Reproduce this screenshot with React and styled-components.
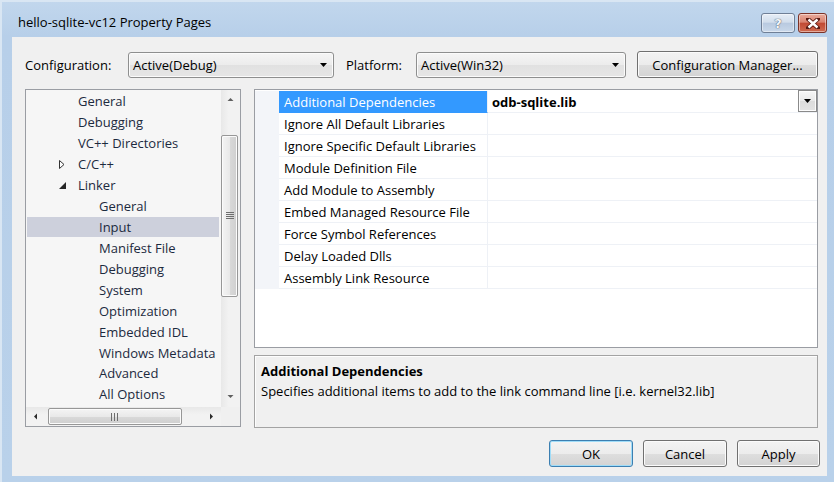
import React from 'react';
import styled, { createGlobalStyle } from 'styled-components';

const GlobalStyle = createGlobalStyle`
  html, body { margin: 0; padding: 0; background: #b9d1ea; }
  body { font-family: 'Open Sans', 'Noto Sans', sans-serif; font-size: 13px; color: #000; }
  * { box-sizing: border-box; }
`;

/* ---------- window frame ---------- */

const Window = styled.div`
  width: 834px;
  height: 482px;
  display: flex;
  flex-direction: column;
  padding: 0 7px 6px 12px;
  overflow: hidden;
  background: linear-gradient(180deg, #c2d7ed 0px, #b7cfe9 36px, #b9d1ea 100%);
  box-shadow: inset 2px 2px 0 #d9e6f3;
`;

const TitleBar = styled.div`
  height: 37px;
  display: flex;
  align-items: flex-start;
  padding-left: 6px;
`;

const Title = styled.div`
  font-size: 13px;
  line-height: 18px;
  margin-top: 13px;
  color: #000;
  white-space: nowrap;
`;

const CaptionButtons = styled.div`
  margin-left: auto;
  margin-top: 13px;
  display: flex;
  gap: 3px;
`;

const CaptionButton = styled.div`
  width: ${(p) => p.$w}px;
  height: 20px;
  border-radius: 3px;
  border: 1px solid ${(p) => (p.$close ? '#7b3328' : '#6f7f96')};
  background: ${(p) =>
    p.$close
      ? 'linear-gradient(180deg, #e9ab9c 0%, #d98370 45%, #c24a34 52%, #cf6a50 100%)'
      : 'linear-gradient(180deg, #e6edf6 0%, #d2deec 45%, #b9cae0 52%, #c9d8ea 100%)'};
  box-shadow: inset 0 0 0 1px rgba(255, 255, 255, 0.45);
  display: flex;
  align-items: center;
  justify-content: center;
`;

const HelpGlyph = styled.span`
  font-family: 'DejaVu Sans', sans-serif;
  font-weight: bold;
  font-size: 13px;
  line-height: 1;
  color: #f4f6fa;
  text-shadow: 0 0 1px #4a5668, 0 0 1px #4a5668;
`;

/* ---------- client area ---------- */

const Client = styled.div`
  flex: 1;
  background: #f0f0f0;
  display: flex;
  flex-direction: column;
  padding: 14px 9px 9px 13px;
`;

const Toolbar = styled.div`
  display: grid;
  grid-template-columns: 103px 206px 82px 210px 1fr;
  align-items: center;
  height: 27px;
`;

const FieldLabel = styled.span`
  padding-left: ${(p) => p.$indent || 0}px;
  white-space: nowrap;
`;

const Select = styled.div`
  height: 26px;
  border: 1px solid #8e8f8f;
  border-radius: 3px;
  background: linear-gradient(180deg, #f5f5f5 0%, #ececec 50%, #e1e1e1 51%, #e6e6e6 100%);
  box-shadow: inset 0 0 0 1px #fbfbfb;
  display: flex;
  align-items: center;
  padding: 0 6px 0 4px;
  justify-content: space-between;
`;

const PushButton = styled.button`
  font: inherit;
  color: #000;
  width: ${(p) => p.$w || 84}px;
  height: ${(p) => p.$h || 27}px;
  justify-self: end;
  padding: 0;
  border: 1px solid ${(p) => (p.$default ? '#3c7fb1' : '#707070')};
  border-radius: 3px;
  background: linear-gradient(180deg, #f3f3f3 0%, #ececec 50%, #dedede 51%, #d3d3d3 100%);
  box-shadow: inset 0 0 0 1px ${(p) => (p.$default ? '#9fdcf8' : '#fbfbfb')};
`;

const Main = styled.div`
  margin-top: 11px;
  height: 339px;
  display: grid;
  grid-template-columns: 216px 1fr;
  column-gap: 13px;
`;

/* ---------- category tree ---------- */

const TreePanel = styled.div`
  border: 1px solid #9a9da3;
  background: #f6f6f6;
  display: grid;
  grid-template-columns: 1fr 19px;
  grid-template-rows: 1fr 19px;
  height: 338px;
`;

const TreeList = styled.div`
  padding-top: 1px;
  overflow: hidden;
`;

const TreeRow = styled.div`
  height: 20.93px;
  margin: 0 2px 0 1px;
  display: flex;
  align-items: center;
  padding-left: ${(p) => p.$level * 21 + 30}px;
  background: ${(p) => (p.$selected ? '#cdd0dc' : 'transparent')};
  color: #1c2a3e;
  white-space: nowrap;
`;

const Expander = styled.span`
  width: 21px;
  height: 21px;
  flex: none;
  display: flex;
  align-items: center;
  padding-left: 2px;
`;

const VScroll = styled.div`
  background: linear-gradient(90deg, #e8e8e8 0%, #f2f2f2 40%, #f2f2f2 100%);
  display: flex;
  flex-direction: column;
`;

const HScroll = styled.div`
  background: linear-gradient(180deg, #e8e8e8 0%, #f2f2f2 40%, #f2f2f2 100%);
  display: flex;
  align-items: center;
`;

const ScrollArrow = styled.div`
  flex: none;
  width: ${(p) => (p.$vertical ? '19px' : '20px')};
  height: ${(p) => (p.$vertical ? '20px' : '19px')};
  display: flex;
  align-items: center;
  justify-content: center;
`;

const ScrollRest = styled.div`
  flex: 1;
`;

const VThumb = styled.div`
  flex: none;
  margin: ${(p) => p.$offset}px 2px 0 0;
  height: ${(p) => p.$size}px;
  border: 1px solid #979797;
  border-radius: 2px;
  background: linear-gradient(90deg, #f4f4f4 0%, #e9e9e9 50%, #d9d9d9 51%, #cfcfcf 100%);
  box-shadow: inset 0 0 0 1px #fbfbfb;
  display: flex;
  align-items: center;
  justify-content: center;
`;

const HThumb = styled.div`
  flex: none;
  margin-left: ${(p) => p.$offset}px;
  width: ${(p) => p.$size}px;
  height: 17px;
  border: 1px solid #979797;
  border-radius: 2px;
  background: linear-gradient(180deg, #f4f4f4 0%, #e9e9e9 50%, #d9d9d9 51%, #cfcfcf 100%);
  box-shadow: inset 0 0 0 1px #fbfbfb;
  display: flex;
  align-items: center;
  justify-content: center;
`;

const ScrollCorner = styled.div`
  background: #f0f0f0;
`;

/* ---------- property grid ---------- */

const RightColumn = styled.div`
  display: flex;
  flex-direction: column;
  gap: 7px;
`;

const GridPanel = styled.div`
  flex: 1;
  border: 1px solid #9a9da3;
  background: #fff;
  padding-top: 1px;
`;

const GridRow = styled.div`
  display: grid;
  grid-template-columns: 24px 209px 1fr;
  height: 22px;
`;

const Gutter = styled.div`
  background: #f3f5f9;
`;

const NameCell = styled.div`
  display: flex;
  align-items: center;
  padding-left: 5px;
  height: 22px;
  border-bottom: 1px solid ${(p) => (p.$selected ? '#3399ff' : '#eef1f6')};
  border-right: 1px solid #eef1f6;
  background: ${(p) => (p.$selected ? '#3399ff' : '#fff')};
  color: ${(p) => (p.$selected ? '#fff' : '#000')};
  white-space: nowrap;
`;

const ValueCell = styled.div`
  display: flex;
  align-items: center;
  justify-content: space-between;
  padding-left: 4px;
  height: 22px;
  border-bottom: 1px solid #eef1f6;
  font-weight: ${(p) => (p.$bold ? 700 : 400)};
  white-space: nowrap;
`;

const DropButton = styled.div`
  width: 19px;
  height: 22px;
  margin-top: -1px;
  border: 1px solid #8a8a8a;
  background: linear-gradient(180deg, #f6f6f6 0%, #e9e9e9 50%, #dcdcdc 51%, #e3e3e3 100%);
  box-shadow: inset 0 0 0 1px #fcfcfc;
  display: flex;
  align-items: center;
  justify-content: center;
`;

const Description = styled.div`
  height: 73px;
  border: 1px solid #a3a3a3;
  box-shadow: inset 1px 1px 0 #fdfdfd;
  background: #f0f0f0;
  padding: 5px 6px;
  line-height: 20px;
`;

const DescTitle = styled.div`
  font-weight: 700;
`;

const ButtonRow = styled.div`
  margin-top: 12px;
  margin-right: -2px;
  display: flex;
  justify-content: flex-end;
  gap: 10px;
`;

/* ---------- small glyphs ---------- */

const DownTriangle = ({ w = 7, h = 4 }) => (
  <svg width={w} height={h} viewBox="0 0 7 4">
    <path d="M0 0 H7 L3.5 4 Z" fill="#000" />
  </svg>
);

const Arrow = ({ dir }) => {
  const paths = {
    up: 'M0.5 4 L3.5 1 L6.5 4 Z',
    down: 'M0.5 1 L3.5 4 L6.5 1 Z',
    left: 'M4 0.5 L1 3.5 L4 6.5 Z',
    right: 'M2 0.5 L5 3.5 L2 6.5 Z',
  };
  return (
    <svg width="7" height="7" viewBox="0 0 7 7">
      <path d={paths[dir]} fill={dir === 'up' || dir === 'down' ? '#5f5f5f' : '#2b2b2b'} />
    </svg>
  );
};

const Grip = ({ vertical }) =>
  vertical ? (
    <svg width="8" height="8" viewBox="0 0 8 8">
      {[0.5, 2.5, 4.5, 6.5].map((y) => (
        <line key={y} x1="0" x2="8" y1={y} y2={y} stroke="#6e6e6e" strokeWidth="1" />
      ))}
    </svg>
  ) : (
    <svg width="8" height="8" viewBox="0 0 8 8">
      {[0.5, 3.5, 6.5].map((x) => (
        <line key={x} y1="0" y2="8" x1={x} x2={x} stroke="#6e6e6e" strokeWidth="1" />
      ))}
    </svg>
  );

const CollapsedGlyph = () => (
  <svg width="6" height="9" viewBox="0 0 6 9">
    <path d="M0.5 0.5 L5 4.5 L0.5 8.5 Z" fill="#fff" stroke="#333" strokeWidth="1" />
  </svg>
);

const ExpandedGlyph = () => (
  <svg width="7" height="7" viewBox="0 0 7 7">
    <path d="M7 0 L7 7 L0 7 Z" fill="#262626" />
  </svg>
);

const CloseGlyph = () => (
  <svg width="14" height="11" viewBox="0 0 14 11">
    <path d="M2 1 L12 10 M12 1 L2 10" stroke="#5a1a12" strokeWidth="4.2" strokeLinecap="square" />
    <path d="M2.5 1.5 L11.5 9.5 M11.5 1.5 L2.5 9.5" stroke="#fff" strokeWidth="2.4" />
  </svg>
);

/* ---------- data ---------- */

const treeItems = [
  { label: 'General', level: 0 },
  { label: 'Debugging', level: 0 },
  { label: 'VC++ Directories', level: 0 },
  { label: 'C/C++', level: 0, state: 'collapsed' },
  { label: 'Linker', level: 0, state: 'expanded' },
  { label: 'General', level: 1 },
  { label: 'Input', level: 1, selected: true },
  { label: 'Manifest File', level: 1 },
  { label: 'Debugging', level: 1 },
  { label: 'System', level: 1 },
  { label: 'Optimization', level: 1 },
  { label: 'Embedded IDL', level: 1 },
  { label: 'Windows Metadata', level: 1 },
  { label: 'Advanced', level: 1 },
  { label: 'All Options', level: 1 },
];

const properties = [
  { name: 'Additional Dependencies', value: 'odb-sqlite.lib', selected: true },
  { name: 'Ignore All Default Libraries' },
  { name: 'Ignore Specific Default Libraries' },
  { name: 'Module Definition File' },
  { name: 'Add Module to Assembly' },
  { name: 'Embed Managed Resource File' },
  { name: 'Force Symbol References' },
  { name: 'Delay Loaded Dlls' },
  { name: 'Assembly Link Resource' },
];

export default function App() {
  return (
    <>
      <GlobalStyle />
      <Window>
        <TitleBar>
          <Title>hello-sqlite-vc12 Property Pages</Title>
          <CaptionButtons>
            <CaptionButton $w={34}>
              <HelpGlyph>?</HelpGlyph>
            </CaptionButton>
            <CaptionButton $w={29} $close>
              <CloseGlyph />
            </CaptionButton>
          </CaptionButtons>
        </TitleBar>

        <Client>
          <Toolbar>
            <FieldLabel>Configuration:</FieldLabel>
            <Select>
              <span>Active(Debug)</span>
              <DownTriangle />
            </Select>
            <FieldLabel $indent={12}>Platform:</FieldLabel>
            <Select>
              <span>Active(Win32)</span>
              <DownTriangle />
            </Select>
            <PushButton $w={181}>Configuration Manager...</PushButton>
          </Toolbar>

          <Main>
            <TreePanel>
              <TreeList>
                {treeItems.map((item, i) => (
                  <TreeRow key={i} $level={item.level} $selected={item.selected}>
                    <Expander>
                      {item.state === 'collapsed' && <CollapsedGlyph />}
                      {item.state === 'expanded' && <ExpandedGlyph />}
                    </Expander>
                    {item.label}
                  </TreeRow>
                ))}
              </TreeList>
              <VScroll>
                <ScrollArrow $vertical>
                  <Arrow dir="up" />
                </ScrollArrow>
                <VThumb $offset={25} $size={162}>
                  <Grip vertical />
                </VThumb>
                <ScrollRest />
                <ScrollArrow $vertical>
                  <Arrow dir="down" />
                </ScrollArrow>
              </VScroll>
              <HScroll>
                <ScrollArrow>
                  <Arrow dir="left" />
                </ScrollArrow>
                <HThumb $offset={2} $size={134}>
                  <Grip />
                </HThumb>
                <ScrollRest />
                <ScrollArrow>
                  <Arrow dir="right" />
                </ScrollArrow>
              </HScroll>
              <ScrollCorner />
            </TreePanel>

            <RightColumn>
              <GridPanel>
                {properties.map((p) => (
                  <GridRow key={p.name}>
                    <Gutter />
                    <NameCell $selected={p.selected}>{p.name}</NameCell>
                    <ValueCell $bold={!!p.value}>
                      <span>{p.value || ''}</span>
                      {p.selected && (
                        <DropButton>
                          <DownTriangle w={7} h={4} />
                        </DropButton>
                      )}
                    </ValueCell>
                  </GridRow>
                ))}
              </GridPanel>
              <Description>
                <DescTitle>Additional Dependencies</DescTitle>
                <div>Specifies additional items to add to the link command line [i.e. kernel32.lib]</div>
              </Description>
            </RightColumn>
          </Main>

          <ButtonRow>
            <PushButton $default>OK</PushButton>
            <PushButton>Cancel</PushButton>
            <PushButton $w={83}>Apply</PushButton>
          </ButtonRow>
        </Client>
      </Window>
    </>
  );
}
